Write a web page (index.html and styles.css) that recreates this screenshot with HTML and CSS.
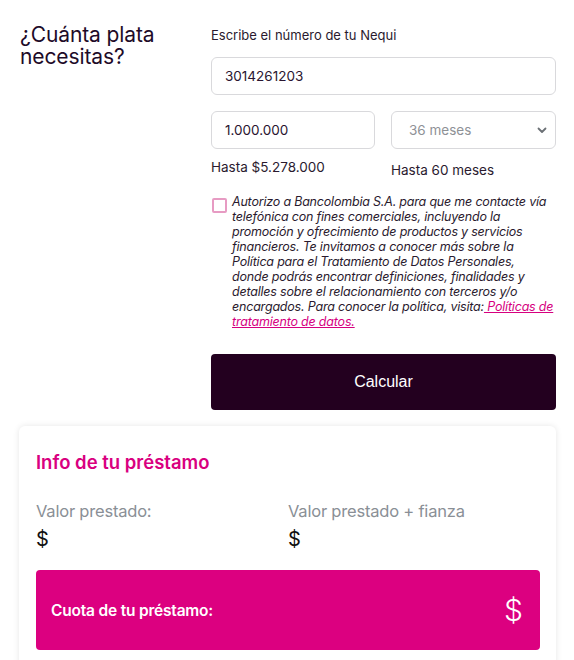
FILE: index.html
```html
<!DOCTYPE html>
<html lang="es">
<head>
<meta charset="utf-8">
<link rel="stylesheet" href="styles.css">
</head>
<body>
<div class="page">
  <div class="form-area">
    <h1 class="title">¿Cuánta plata necesitas?</h1>
    <div class="form">
      <label class="label">Escribe el número de tu Nequi</label>
      <input class="input full" type="text" value="3014261203">
      <div class="row">
        <div class="col">
          <input class="input" type="text" value="1.000.000">
          <div class="hint">Hasta $5.278.000</div>
        </div>
        <div class="col">
          <div class="select">
            <span>36 meses</span>
            <svg width="10" height="7" viewBox="0 0 10 7"><path d="M1.5 1.5 L5 5 L8.5 1.5" fill="none" stroke="#6b7075" stroke-width="1.8" stroke-linecap="round" stroke-linejoin="round"/></svg>
          </div>
          <div class="hint hint2">Hasta 60 meses</div>
        </div>
      </div>
      <div class="consent">
        <span class="check"></span>
        <p class="consent-text">Autorizo a Bancolombia S.A. para que me contacte vía<br>telefónica con fines comerciales, incluyendo la<br>promoción y ofrecimiento de productos y servicios<br>financieros. Te invitamos a conocer más sobre la<br>Política para el Tratamiento de Datos Personales,<br>donde podrás encontrar definiciones, finalidades y<br>detalles sobre el relacionamiento con terceros y/o<br>encargados. Para conocer la política, visita:<a class="link" href="#"> Políticas de<br>tratamiento de datos.</a></p>
      </div>
      <button class="btn">Calcular</button>
    </div>
  </div>
  <div class="card">
    <h2 class="card-title">Info de tu préstamo</h2>
    <div class="values">
      <div class="value">
        <div class="value-label">Valor prestado:</div>
        <div class="value-num">$</div>
      </div>
      <div class="value">
        <div class="value-label">Valor prestado + fianza</div>
        <div class="value-num">$</div>
      </div>
    </div>
    <div class="quota">
      <span class="quota-label">Cuota de tu préstamo:</span>
      <span class="quota-num">$</span>
    </div>
  </div>
</div>
</body>
</html>
```
FILE: styles.css
```css
* { box-sizing: border-box; }
body {
  margin: 0;
  background: #ffffff;
  font-family: Inter, "Noto Sans", sans-serif;
  color: #2a1530;
}
.page {
  padding: 0 18px 0 19px;
}
.form-area {
  display: grid;
  grid-template-columns: 192px 345px;
  padding-top: 24px;
}
.title {
  margin: 0;
  padding-left: 1px;
  font-size: 21px;
  line-height: 22px;
  font-weight: 400;
  color: #1e0b28;
  letter-spacing: -0.1px;
}
.form {
  display: flex;
  flex-direction: column;
}
.label {
  font-size: 13px;
  line-height: 18px;
  padding-top: 2px;
  color: #2a1a2e;
}
.input {
  display: block;
  width: 100%;
  height: 38px;
  border: 1px solid #d9d9dc;
  border-radius: 6px;
  padding: 0 13px;
  font-family: Inter, "Noto Sans", sans-serif;
  font-size: 13.5px;
  color: #2a1530;
  background: #fff;
  outline: none;
}
.full { margin-top: 13px; }
.row {
  display: grid;
  grid-template-columns: 164px 165px;
  column-gap: 16px;
  margin-top: 16px;
}
.select {
  height: 38px;
  border: 1px solid #d9d9dc;
  border-radius: 6px;
  padding: 0 8px 0 17px;
  display: flex;
  align-items: center;
  justify-content: space-between;
  font-size: 13.5px;
  color: #8e9196;
}
.hint {
  margin-top: 9px;
  font-size: 13.5px;
  line-height: 18px;
  color: #2a1a2e;
}
.hint2 { margin-top: 12px; }
.consent {
  display: flex;
  gap: 5px;
  margin-top: 15px;
}
.check {
  flex: none;
  width: 15px;
  height: 15px;
  margin-top: 4px;
  margin-left: 1px;
  border: 2px solid #e79bc3;
  border-radius: 2px;
}
.consent-text {
  margin: 0;
  font-size: 12.5px;
  line-height: 15px;
  font-style: italic;
  color: #2a1a2e;
  letter-spacing: -0.2px;
  white-space: nowrap;
}
.link {
  color: #d6007f;
  text-decoration: underline;
}
.btn {
  margin-top: 25px;
  height: 56px;
  width: 100%;
  border: none;
  border-radius: 4px;
  background: #23001f;
  color: #ffffff;
  font-family: "Liberation Sans", Arial, sans-serif;
  font-size: 16px;
}
.card {
  margin-top: 16px;
  background: #fff;
  border-radius: 6px;
  box-shadow: 0 0 6px rgba(0,0,0,0.10);
  padding: 24px 16px 10px 17px;
  height: 260px;
}
.card-title {
  margin: 0;
  font-size: 18.5px;
  line-height: 24px;
  font-weight: 600;
  color: #d9007f;
}
.values {
  display: grid;
  grid-template-columns: 252px 1fr;
  margin-top: 26px;
}
.value-label {
  font-size: 16.5px;
  line-height: 22px;
  color: #8a8f96;
  letter-spacing: -0.2px;
}
.value-num {
  margin-top: 5px;
  font-size: 20px;
  line-height: 24px;
  color: #111;
}
.quota {
  margin-top: 19px;
  height: 80px;
  border-radius: 4px;
  background: #dc0080;
  display: flex;
  align-items: center;
  justify-content: space-between;
  padding: 0 17px 0 15px;
  color: #fff;
}
.quota-label {
  font-size: 15.5px;
  font-weight: 600;
  letter-spacing: -0.2px;
}
.quota-num {
  font-size: 30px;
  font-weight: 300;
  line-height: 30px;
}
```
